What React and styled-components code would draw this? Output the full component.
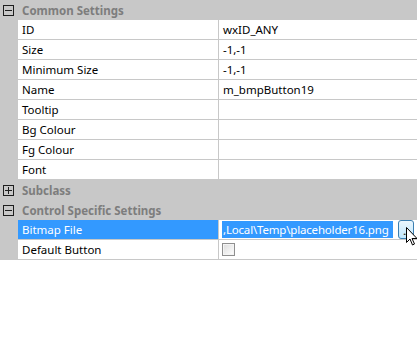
import React from 'react';
import styled, { createGlobalStyle } from 'styled-components';

const GlobalStyle = createGlobalStyle`
  html, body {
    margin: 0;
    padding: 0;
    background: #ffffff;
  }
  body {
    width: 417px;
    height: 338px;
    overflow: hidden;
    font-family: "Noto Sans", "Open Sans", sans-serif;
    font-size: 11.5px;
  }
`;

const Grid = styled.div`
  position: relative;
  width: 417px;
  display: flex;
  flex-direction: column;
`;

const CategoryRow = styled.div`
  display: grid;
  grid-template-columns: 18px 1fr;
  height: 20px;
  background: #c8c8c8;
  align-items: center;
`;

const CategoryTitle = styled.div`
  padding-left: 4px;
  font-weight: bold;
  color: #7d7d7d;
  white-space: nowrap;
`;

const ToggleBox = styled.div`
  width: 11px;
  height: 11px;
  margin-left: 3px;
  box-sizing: border-box;
  border: 1px solid #1e1e1e;
  position: relative;

  &::before {
    content: '';
    position: absolute;
    left: 1px;
    right: 1px;
    top: 4px;
    height: 1px;
    background: #1e1e1e;
  }

  &::after {
    content: '';
    display: ${({ $open }) => ($open ? 'none' : 'block')};
    position: absolute;
    top: 1px;
    bottom: 1px;
    left: 4px;
    width: 1px;
    background: #1e1e1e;
  }
`;

const PropRow = styled.div`
  display: grid;
  grid-template-columns: 18px 201px 1fr;
  height: 20px;
`;

const Gutter = styled.div`
  background: #c8c8c8;
`;

const LabelCell = styled.div`
  box-sizing: border-box;
  border-right: 1px solid #c8c8c8;
  border-bottom: 1px solid #c8c8c8;
  background: ${({ $selected }) => ($selected ? '#3399ff' : '#ffffff')};
  color: ${({ $selected }) => ($selected ? '#ffffff' : '#000000')};
  padding-left: 4px;
  display: flex;
  align-items: center;
  white-space: nowrap;
  overflow: hidden;
`;

const ValueCell = styled.div`
  box-sizing: border-box;
  border-bottom: 1px solid #c8c8c8;
  padding-left: 4px;
  display: flex;
  align-items: center;
  color: #000000;
  white-space: nowrap;
  overflow: hidden;
`;

const EditCell = styled.div`
  box-sizing: border-box;
  border-bottom: 1px solid #c8c8c8;
  display: flex;
  align-items: center;
  padding-left: 3px;
  gap: 5px;
`;

const SelectedText = styled.span`
  background: #3399ff;
  color: #ffffff;
  height: 17px;
  line-height: 17px;
  padding: 0 1px;
  width: 171px;
  box-sizing: border-box;
  letter-spacing: -0.18px;
  white-space: nowrap;
  overflow: hidden;
`;

const BrowseButton = styled.div`
  width: 16px;
  height: 19px;
  box-sizing: border-box;
  border: 1px solid #3c7fb1;
  border-radius: 3px;
  background: linear-gradient(#eaf6fd, #bee6fd);
  font-size: 11px;
  line-height: 20px;
  text-align: center;
  color: #000;
  letter-spacing: -1px;
`;

const CheckBox = styled.div`
  width: 13px;
  height: 13px;
  box-sizing: border-box;
  border: 1px solid #8f8f8f;
  background: linear-gradient(135deg, #dcdcdc, #ffffff);
  box-shadow: inset 0 0 0 1px #f4f4f4;
`;

const Cursor = styled.svg`
  position: absolute;
  left: 406px;
  top: 227px;
`;

const common = [
  ['ID', 'wxID_ANY'],
  ['Size', '-1,-1'],
  ['Minimum Size', '-1,-1'],
  ['Name', 'm_bmpButton19'],
  ['Tooltip', ''],
  ['Bg Colour', ''],
  ['Fg Colour', ''],
  ['Font', ''],
];

const Category = ({ title, open }) => (
  <CategoryRow>
    <ToggleBox $open={open} />
    <CategoryTitle>{title}</CategoryTitle>
  </CategoryRow>
);

const App = () => (
  <>
    <GlobalStyle />
    <Grid>
      <Category title="Common Settings" open />
      {common.map(([label, value]) => (
        <PropRow key={label}>
          <Gutter />
          <LabelCell>{label}</LabelCell>
          <ValueCell>{value}</ValueCell>
        </PropRow>
      ))}
      <Category title="Subclass" />
      <Category title="Control Specific Settings" open />
      <PropRow>
        <Gutter />
        <LabelCell $selected>Bitmap File</LabelCell>
        <EditCell>
          <SelectedText>,Local\Temp\placeholder16.png</SelectedText>
          <BrowseButton>...</BrowseButton>
        </EditCell>
      </PropRow>
      <PropRow>
        <Gutter />
        <LabelCell>Default Button</LabelCell>
        <EditCell>
          <CheckBox />
        </EditCell>
      </PropRow>
      <Cursor width="12" height="19" viewBox="0 0 12 19">
        <path
          d="M0.5 0.5 L0.5 15.5 L4 12 L6.5 18 L8.5 17 L6 11.5 L11 11.5 Z"
          fill="#ffffff"
          stroke="#000000"
          strokeWidth="1"
          strokeLinejoin="miter"
        />
      </Cursor>
    </Grid>
  </>
);

export default App;
